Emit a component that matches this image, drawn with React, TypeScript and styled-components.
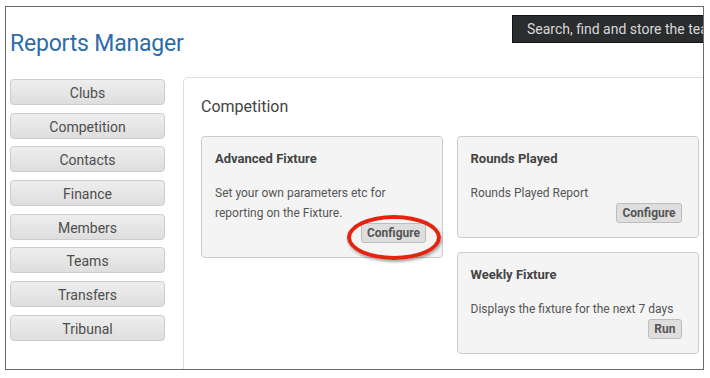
import React from 'react';
import styled, { createGlobalStyle } from 'styled-components';

const GlobalStyle = createGlobalStyle`
  body {
    margin: 0;
    background: #ffffff;
    font-family: Roboto, "Liberation Sans", sans-serif;
  }
`;

const Frame = styled.div`
  box-sizing: border-box;
  margin: 6px 0 0 5px;
  width: 699px;
  height: 364px;
  border: 1px solid #6b6b6b;
  overflow: hidden;
  background: #ffffff;
`;

const Header = styled.div`
  display: grid;
  grid-template-columns: 506px 240px;
  height: 70px;
`;

const Title = styled.h1`
  margin: 23px 0 0 4px;
  font-size: 23px;
  line-height: 28px;
  font-weight: 400;
  color: #2d6cab;
  letter-spacing: -0.2px;
`;

const SearchBar = styled.div`
  box-sizing: border-box;
  margin-top: 8px;
  height: 28px;
  padding-left: 14px;
  background: #2a2c2e;
  border: 1px solid #141414;
  color: #d8d8d8;
  font-size: 14px;
  line-height: 26px;
  white-space: nowrap;
  overflow: hidden;
`;

const Body = styled.div`
  display: flex;
  gap: 18px;
  padding-left: 4px;
`;

const Sidebar = styled.nav`
  display: flex;
  flex-direction: column;
  gap: 7.7px;
  width: 155px;
  flex-shrink: 0;
  margin-top: 2px;
`;

const NavButton = styled.div`
  box-sizing: border-box;
  height: 26px;
  padding-top: 2px;
  border: 1px solid #cccccc;
  border-radius: 4px;
  background: linear-gradient(#eeeeee, #dedede);
  color: #4e4e4e;
  font-size: 14px;
  font-weight: 400;
  line-height: 22px;
  text-align: center;
`;

const Panel = styled.section`
  box-sizing: border-box;
  width: 540px;
  min-height: 320px;
  flex-shrink: 0;
  border: 1px solid #dddddd;
  border-radius: 5px;
  padding: 17px 18px 18px 17px;
`;

const PanelTitle = styled.h2`
  margin: 0 0 17px;
  font-size: 16px;
  line-height: 24px;
  font-weight: 400;
  color: #444444;
`;

const Grid = styled.div`
  display: grid;
  grid-template-columns: 242px 242px;
  column-gap: 13.5px;
  align-items: start;
`;

const Column = styled.div`
  display: flex;
  flex-direction: column;
  gap: 14px;
`;

const Card = styled.div`
  position: relative;
  box-sizing: border-box;
  display: flex;
  flex-direction: column;
  padding: 14px 16px 14px 13px;
  background: #f4f4f4;
  border: 1px solid #cccccc;
  border-radius: 4px;
`;

const CardTitle = styled.div`
  font-size: 13px;
  line-height: 16px;
  font-weight: 700;
  color: #444444;
  margin-bottom: 16px;
`;

const CardText = styled.div`
  font-size: 12px;
  line-height: 20px;
  color: #555555;
`;

const ActionButton = styled.div`
  align-self: flex-end;
  box-sizing: border-box;
  height: 20px;
  padding: 0 5px;
  background: #dedede;
  border: 1px solid #bdbdbd;
  border-radius: 3px;
  color: #555555;
  font-size: 12px;
  font-weight: 700;
  line-height: 18px;
`;

const Highlight = styled.div`
  position: absolute;
  left: 145px;
  top: 78px;
  width: 94px;
  height: 45px;
  box-sizing: border-box;
  border: 4px solid #e5240f;
  border-radius: 50%;
  box-shadow: 1px 2px 3px rgba(0, 0, 0, 0.35);
  pointer-events: none;
`;

const navItems = [
  'Clubs',
  'Competition',
  'Contacts',
  'Finance',
  'Members',
  'Teams',
  'Transfers',
  'Tribunal',
];

const ReportCard: React.FC<{
  title: string;
  text: React.ReactNode;
  action: string;
  highlighted?: boolean;
}> = ({ title, text, action, highlighted }) => (
  <Card>
    <CardTitle>{title}</CardTitle>
    <CardText>{text}</CardText>
    <ActionButton>{action}</ActionButton>
    {highlighted && <Highlight />}
  </Card>
);

const App: React.FC = () => {
  return (
    <>
      <GlobalStyle />
      <Frame>
        <Header>
          <Title>Reports Manager</Title>
          <SearchBar>Search, find and store the tea</SearchBar>
        </Header>
        <Body>
          <Sidebar>
            {navItems.map(item => (
              <NavButton key={item}>{item}</NavButton>
            ))}
          </Sidebar>
          <Panel>
            <PanelTitle>Competition</PanelTitle>
            <Grid>
              <Column>
                <ReportCard
                  title="Advanced Fixture"
                  text={<>Set your own parameters etc for<br />reporting on the Fixture.</>}
                  action="Configure"
                  highlighted
                />
              </Column>
              <Column>
                <ReportCard
                  title="Rounds Played"
                  text="Rounds Played Report"
                  action="Configure"
                />
                <ReportCard
                  title="Weekly Fixture"
                  text="Displays the fixture for the next 7 days"
                  action="Run"
                />
              </Column>
            </Grid>
          </Panel>
        </Body>
      </Frame>
    </>
  );
};

export default App;
